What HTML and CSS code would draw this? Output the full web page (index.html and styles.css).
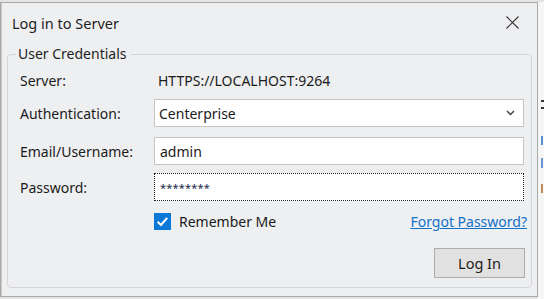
FILE: index.html
```html
<!DOCTYPE html>
<html>
<head>
<meta charset="utf-8">
<link rel="stylesheet" href="styles.css">
</head>
<body>
<div class="desktop">
  <div class="window">
    <div class="titlebar">
      <span class="title">Log in to Server</span>
      <span class="close" aria-label="Close">
        <svg width="13" height="13" viewBox="0 0 13 13"><path d="M0.5 0.5 L12.5 12.5 M12.5 0.5 L0.5 12.5" stroke="#3a3a3a" stroke-width="1.2" fill="none"/></svg>
      </span>
    </div>
    <fieldset class="group">
      <legend class="legend">User Credentials</legend>
      <div class="form">
        <div class="label">Server:</div>
        <div class="value">HTTPS://LOCALHOST:9264</div>

        <div class="label">Authentication:</div>
        <div class="select">
          <span>Centerprise</span>
          <svg class="chev" width="9" height="6" viewBox="0 0 9 6"><path d="M1 1 L4.5 4.5 L8 1" stroke="#444" stroke-width="1.5" fill="none"/></svg>
        </div>

        <div class="label">Email/Username:</div>
        <div class="input">admin</div>

        <div class="label">Password:</div>
        <div class="input pass"><span class="stars">********</span></div>

        <div class="check-row">
          <span class="checkbox">
            <svg width="17" height="17" viewBox="0 0 17 17"><rect width="17" height="17" fill="#0a78d7"/><path d="M3.6 8.8 L6.9 12 L13.2 4.8" stroke="#fff" stroke-width="2" fill="none"/></svg>
          </span>
          <span class="check-label">Remember Me</span>
          <a class="forgot" href="#">Forgot Password?</a>
        </div>

        <div class="btn-row">
          <button class="btn">Log In</button>
        </div>
      </div>
    </fieldset>
  </div>
  <div class="behind">
    <span class="mark m1"></span>
    <span class="mark m2"></span>
    <span class="mark m3"></span>
    <span class="mark m4"></span>
  </div>
</div>
</body>
</html>
```

FILE: styles.css
```css
* { box-sizing: border-box; }
html, body { margin: 0; padding: 0; }
body {
  width: 544px;
  height: 299px;
  overflow: hidden;
  background: #e4e4e4;
  font-family: "Noto Sans", "Open Sans", sans-serif;
  color: #1b1b1b;
}
.desktop {
  display: flex;
  align-items: flex-start;
  padding-top: 2px;
}
.window {
  width: 538px;
  height: 295px;
  background: #eeeff1;
  border: 1px solid #a9a9a9;
  box-shadow: inset 1px 0 0 #c9c9c9;
  flex: none;
}
.behind {
  flex: 1;
  height: 297px;
  background: #f6f6f6;
  display: flex;
  flex-direction: column;
  padding-left: 3px;
}
.mark { display: block; width: 3px; }
.m1 { height: 9px; margin-top: 98px; border-top: 2px solid #333; border-bottom: 2px solid #333; }
.m2 { height: 9px; margin-top: 27px; background: #5b8fd0; width: 2px; }
.m3 { height: 10px; margin-top: 13px; background: #6b96d4; width: 2px; }
.m4 { height: 9px; margin-top: 16px; background: #b98a5a; width: 2px; }

.titlebar {
  height: 39px;
  display: flex;
  align-items: center;
  justify-content: space-between;
  padding: 0 18px 0 11px;
}
.title {
  font-size: 14.5px;
  color: #1e1e1e;
  margin-top: 1px;
}
.close { display: flex; width: 13px; height: 13px; margin-top: -1px; }

.group {
  margin: 2px 5px 0 6px;
  padding: 0 7px 0 12px;
  height: 244px;
  border: 1px solid #d6d6d8;
  border-radius: 4px;
  min-width: 0;
}
.legend {
  font-size: 14px;
  padding: 0 4px 0 2px;
  margin-left: -4px;
  color: #1e1e1e;
  line-height: 20px;
}
.form {
  display: grid;
  grid-template-columns: 134px 1fr;
  grid-template-rows: 33px 38px 36px 28px 47px 30px;
  margin-top: 2px;
  font-size: 14px;
}
.label, .value, .select, .input {
  height: 28px;
  align-self: start;
}
.label { display: flex; align-items: center; }
.value { display: flex; align-items: center; padding-left: 4px; }
.select, .input {
  background: #fff;
  border: 1px solid #c4c4c4;
  display: flex;
  align-items: center;
  padding: 0 8px 0 4px;
}
.select { justify-content: space-between; }
.input { padding-left: 5px; }
.pass { border: 1px dotted #1f1f1f; }
.stars { font-size: 11px; letter-spacing: 0.2px; color: #1c2a4a; }
.check-row {
  grid-column: 2;
  align-self: start;
  height: 17px;
  margin-top: 12px;
  display: flex;
  align-items: center;
}
.checkbox { display: flex; width: 17px; height: 17px; }
.check-label { margin-left: 8px; }
.forgot {
  margin-left: auto;
  color: #1170c8;
  text-decoration: underline;
  margin-right: -3px;
}
.btn-row {
  grid-column: 2;
  display: flex;
  justify-content: flex-end;
  align-items: flex-start;
}
.btn {
  width: 91px;
  height: 30px;
  margin-right: -1px;
  background: #e1e1e1;
  border: 1px solid #adadad;
  font-family: inherit;
  font-size: 14.5px;
  color: #1b1b1b;
  padding: 0;
}
```
